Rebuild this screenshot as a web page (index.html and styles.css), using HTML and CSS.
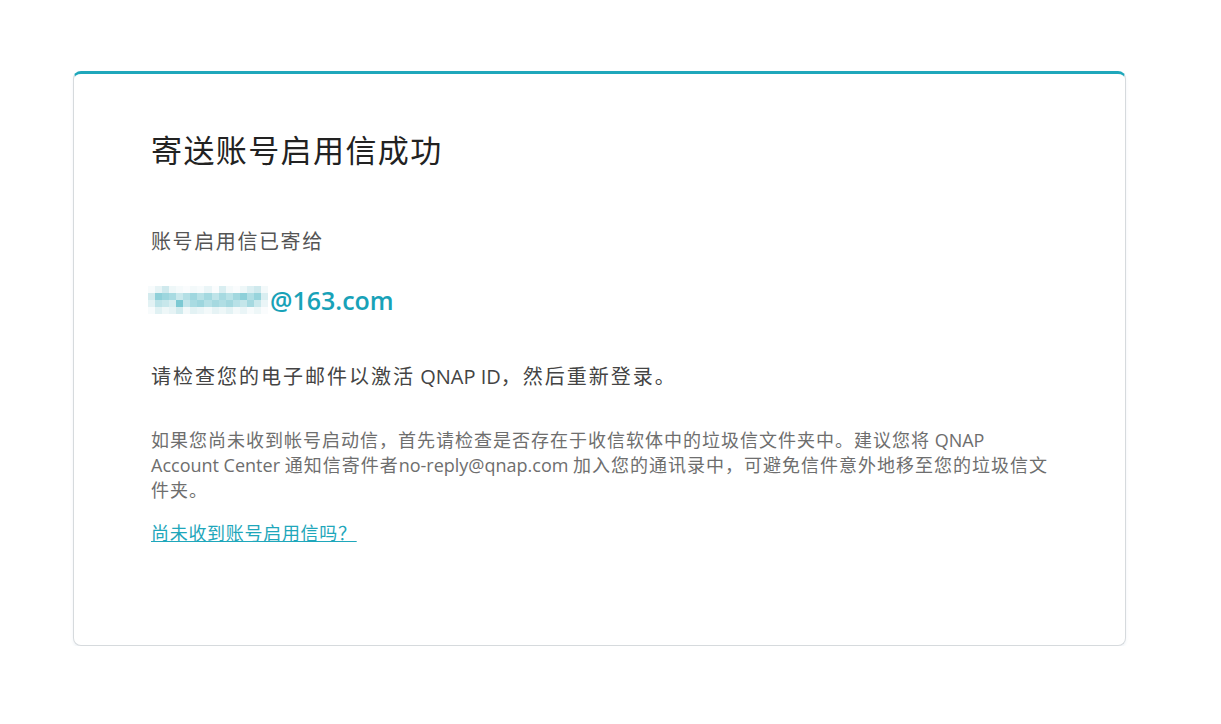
FILE: index.html
```html
<!DOCTYPE html>
<html lang="zh-CN">
<head>
<meta charset="utf-8">
<title>寄送账号启用信成功</title>
<link rel="stylesheet" href="styles.css">
</head>
<body>
<div class="card">
  <h1 class="title">寄送账号启用信成功</h1>
  <p class="sent">账号启用信已寄给</p>
  <p class="email">
    <svg class="mosaic" width="120" height="28" viewBox="0 0 17 4" preserveAspectRatio="none" aria-hidden="true">
      <g shape-rendering="crispEdges">
        <rect x="0" y="0" width="17" height="4" fill="#eef7f8"/>
        <rect x="0" y="0" width="1" height="1" fill="#f7fbfc"/><rect x="1" y="0" width="1" height="1" fill="#e6f3f5"/><rect x="2" y="0" width="1" height="1" fill="#cfe9ed"/><rect x="3" y="0" width="1" height="1" fill="#eef7f8"/><rect x="4" y="0" width="1" height="1" fill="#f5fafb"/><rect x="5" y="0" width="1" height="1" fill="#fafcfd"/><rect x="6" y="0" width="1" height="1" fill="#f3f9fa"/><rect x="7" y="0" width="1" height="1" fill="#f7fbfc"/><rect x="8" y="0" width="1" height="1" fill="#eaf5f7"/><rect x="9" y="0" width="1" height="1" fill="#fafcfd"/><rect x="10" y="0" width="1" height="1" fill="#d9eef1"/><rect x="11" y="0" width="1" height="1" fill="#f3f9fa"/><rect x="12" y="0" width="1" height="1" fill="#fafcfd"/><rect x="13" y="0" width="1" height="1" fill="#eef7f8"/><rect x="14" y="0" width="1" height="1" fill="#dcefF2"/><rect x="15" y="0" width="1" height="1" fill="#cfe9ed"/><rect x="16" y="0" width="1" height="1" fill="#f3f9fa"/>
        <rect x="0" y="1" width="1" height="1" fill="#d4ebee"/><rect x="1" y="1" width="1" height="1" fill="#8fd0d9"/><rect x="2" y="1" width="1" height="1" fill="#9dd6de"/><rect x="3" y="1" width="1" height="1" fill="#a9dbe2"/><rect x="4" y="1" width="1" height="1" fill="#c9e8ec"/><rect x="5" y="1" width="1" height="1" fill="#b3dfe5"/><rect x="6" y="1" width="1" height="1" fill="#a0d7df"/><rect x="7" y="1" width="1" height="1" fill="#b7e1e6"/><rect x="8" y="1" width="1" height="1" fill="#a4d9e0"/><rect x="9" y="1" width="1" height="1" fill="#bfe4e9"/><rect x="10" y="1" width="1" height="1" fill="#a7dae1"/><rect x="11" y="1" width="1" height="1" fill="#b9e2e7"/><rect x="12" y="1" width="1" height="1" fill="#a2d8df"/><rect x="13" y="1" width="1" height="1" fill="#8ed0d9"/><rect x="14" y="1" width="1" height="1" fill="#b0dee4"/><rect x="15" y="1" width="1" height="1" fill="#98d4dc"/><rect x="16" y="1" width="1" height="1" fill="#d9eef1"/>
        <rect x="0" y="2" width="1" height="1" fill="#e3f2f4"/><rect x="1" y="2" width="1" height="1" fill="#bde3e8"/><rect x="2" y="2" width="1" height="1" fill="#c7e7eb"/><rect x="3" y="2" width="1" height="1" fill="#d6edf0"/><rect x="4" y="2" width="1" height="1" fill="#7dc9d3"/><rect x="5" y="2" width="1" height="1" fill="#c2e5ea"/><rect x="6" y="2" width="1" height="1" fill="#a9dbe2"/><rect x="7" y="2" width="1" height="1" fill="#9ed6de"/><rect x="8" y="2" width="1" height="1" fill="#b5e0e6"/><rect x="9" y="2" width="1" height="1" fill="#a6d9e0"/><rect x="10" y="2" width="1" height="1" fill="#b0dee4"/><rect x="11" y="2" width="1" height="1" fill="#a3d8df"/><rect x="12" y="2" width="1" height="1" fill="#b8e1e7"/><rect x="13" y="2" width="1" height="1" fill="#c4e6ea"/><rect x="14" y="2" width="1" height="1" fill="#a5d9e0"/><rect x="15" y="2" width="1" height="1" fill="#c9e8ec"/><rect x="16" y="2" width="1" height="1" fill="#eaf5f7"/>
        <rect x="0" y="3" width="1" height="1" fill="#f7fbfc"/><rect x="1" y="3" width="1" height="1" fill="#e0f1f3"/><rect x="2" y="3" width="1" height="1" fill="#eef7f8"/><rect x="3" y="3" width="1" height="1" fill="#e6f3f5"/><rect x="4" y="3" width="1" height="1" fill="#d2ebee"/><rect x="5" y="3" width="1" height="1" fill="#f3f9fa"/><rect x="6" y="3" width="1" height="1" fill="#e3f2f4"/><rect x="7" y="3" width="1" height="1" fill="#eaf5f7"/><rect x="8" y="3" width="1" height="1" fill="#f3f9fa"/><rect x="9" y="3" width="1" height="1" fill="#e6f3f5"/><rect x="10" y="3" width="1" height="1" fill="#eef7f8"/><rect x="11" y="3" width="1" height="1" fill="#e3f2f4"/><rect x="12" y="3" width="1" height="1" fill="#f3f9fa"/><rect x="13" y="3" width="1" height="1" fill="#eaf5f7"/><rect x="14" y="3" width="1" height="1" fill="#f7fbfc"/><rect x="15" y="3" width="1" height="1" fill="#eef7f8"/><rect x="16" y="3" width="1" height="1" fill="#fafcfd"/>
      </g>
    </svg><span class="domain">@163.com</span>
  </p>
  <p class="instruct">请检查您的电子邮件以激活<span class="latin"> QNAP ID</span>，然后重新登录。</p>
  <p class="note">如果您尚未收到帐号启动信，首先请检查是否存在于收信软体中的垃圾信文件夹中。建议您将<span class="latin"> QNAP Account Center </span>通知信寄件者<span class="latin">no-reply@qnap.com </span>加入您的通讯录中，可避免信件意外地移至您的垃圾信文件夹。</p>
  <p class="resend"><a href="#" class="resend-link">尚未收到账号启用信吗？</a></p>
</div>
</body>
</html>
```

FILE: styles.css
```css
html, body {
  margin: 0;
  padding: 0;
  background: #ffffff;
}
body {
  font-family: "Open Sans", "Noto Sans CJK SC", sans-serif;
  color: #444;
}
.card {
  box-sizing: border-box;
  width: 1053px;
  height: 575px;
  margin: 71px 0 0 73px;
  padding: 54px 77px 0 77px;
  border: 1px solid #d6dadd;
  border-top: 3px solid #1fa7bb;
  border-radius: 8px;
  box-shadow: 0 2px 3px rgba(120, 160, 190, 0.12);
  background: #fff;
}
.title {
  margin: 0;
  font-size: 31px;
  line-height: 44px;
  font-weight: 400;
  color: #222;
  letter-spacing: 1.4px;
}
.sent {
  margin: 56px 0 0 0;
  font-size: 20px;
  line-height: 28px;
  color: #555;
  letter-spacing: 1.6px;
}
.email {
  display: flex;
  align-items: center;
  margin: 28px 0 0 -3px;
  height: 32px;
}
.mosaic {
  display: block;
  width: 120px;
  height: 28px;
  margin-right: 2px;
}
.domain {
  font-size: 25px;
  font-weight: 600;
  color: #18a2b8;
  line-height: 32px;
}
.instruct {
  margin: 46px 0 0 0;
  font-size: 20px;
  line-height: 30px;
  color: #444;
  letter-spacing: 2px;
}
.latin {
  letter-spacing: 0;
}
.note {
  margin: 36px 0 0 0;
  width: 902px;
  font-size: 18px;
  line-height: 25px;
  color: #6e6e6e;
  letter-spacing: 1px;
}
.resend {
  margin: 17px 0 0 0;
  font-size: 18px;
  line-height: 26px;
  letter-spacing: 0.7px;
}
.resend-link {
  color: #1fa7bb;
  text-decoration: underline;
}
```
